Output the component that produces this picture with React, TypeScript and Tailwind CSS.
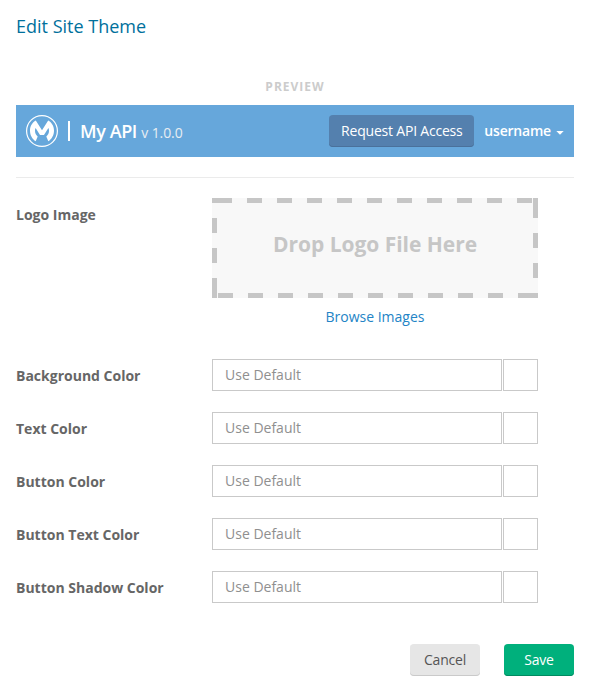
const FIELDS = [
  'Background Color',
  'Text Color',
  'Button Color',
  'Button Text Color',
  'Button Shadow Color',
];

// Left/top offsets of the repeated dashes around the drop zone.
const COLUMNS = [35, 65, 95, 125, 155, 185, 215, 245, 275, 305];

function Logo() {
  return (
    <svg width="32" height="32" viewBox="0 0 32 32" fill="none" aria-hidden="true">
      <circle cx="16" cy="16" r="15.4" stroke="#fff" strokeWidth="1.2" />
      <path
        d="M9.8 5.6 C6.2 7.7 4 11.5 4 15.7 C4 20.1 6.2 24 9.7 26.3 L11.7 21.4 C10 20 9 18 9 15.7 C9 14.7 9.2 13.8 9.6 13 L14 20 H18 L22.4 13 C22.8 13.8 23 14.7 23 15.7 C23 18 22 20 20.3 21.4 L22.3 26.3 C25.8 24 28 20.1 28 15.7 C28 11.5 25.8 7.7 22.2 5.6 L16 15.2 Z"
        fill="#fff"
      />
    </svg>
  );
}

function DropZone() {
  return (
    <div className="relative flex h-[100px] w-[326px] items-center justify-center bg-[#f8f8f8]">
      <svg className="absolute inset-0" width="326" height="100" fill="#c6c6c6" shapeRendering="crispEdges" aria-hidden="true">
        <rect x="0" y="0" width="20" height="5" />
        {COLUMNS.map((x) => (
          <rect key={x} x={x} y="0" width="15" height="5" />
        ))}
        {COLUMNS.map((x) => (
          <rect key={x} x={x - 29} y="95" width="15" height="5" />
        ))}
        <rect x="306" y="95" width="20" height="5" />
        <rect x="321" y="0" width="5" height="20" />
        <rect x="321" y="35" width="5" height="15" />
        <rect x="321" y="65" width="5" height="15" />
        <rect x="0" y="20" width="5" height="15" />
        <rect x="0" y="50" width="5" height="15" />
        <rect x="0" y="80" width="5" height="20" />
      </svg>
      <span className="pb-[9px] text-[21px] font-bold tracking-[-0.03px] text-[#c6c6c6]">Drop Logo File Here</span>
    </div>
  );
}

export default function App() {
  return (
    <main className="h-[692px] w-[589px] overflow-hidden bg-white pr-[15px] pl-4 font-['Open_Sans',sans-serif] text-sm whitespace-nowrap text-[#666]">
      <h1 className="pt-[13px] text-lg leading-[26px] text-[#00709c]">Edit Site Theme</h1>

      <div className="mt-[39px] text-center text-xs leading-[18px] font-bold tracking-[1px] text-[#ccc]">PREVIEW</div>

      <header className="mt-[9px] flex h-[52px] items-center bg-[#66a7db] px-[10px] text-white">
        <Logo />
        <span className="ml-[10px] h-5 w-0.5 bg-white" />
        <span className="ml-[10px] text-lg font-semibold tracking-[-0.4px]">
          My API <span className="text-sm font-normal tracking-[-0.1px] text-[#e8edf2]">v 1.0.0</span>
        </span>
        <button className="ml-auto h-8 w-[145px] rounded-[4px] bg-[#5480ae] text-sm tracking-[-0.2px] shadow-[inset_0_-1px_0_#4a719b]">
          Request API Access
        </button>
        <span className="ml-[10px] text-sm font-semibold tracking-[-0.2px]">username</span>
        <svg className="mt-[3px] ml-[5px]" width="8" height="4" viewBox="0 0 8 4" fill="#fff" aria-hidden="true">
          <path d="M0.3 0H7.7L4 3.7Z" />
        </svg>
      </header>

      <hr className="mt-5 border-[#ebebeb]" />

      <section className="mt-5 flex">
        <span className="w-[196px] pt-[7px] font-bold">Logo Image</span>
        <div className="text-center">
          <DropZone />
          <a className="mt-[9px] block leading-5 text-[#2384c6]">Browse Images</a>
        </div>
      </section>

      <form className="mt-8 flex flex-col gap-[21px]">
        {FIELDS.map((label) => (
          <label key={label} className="flex h-8 items-center">
            <span className="w-[196px] pt-0.5 font-bold">{label}</span>
            <input
              className="h-8 w-[290px] border border-[#c9c9c9] px-3 pb-0.5 text-sm placeholder:text-[#8f8f8f]"
              placeholder="Use Default"
            />
            <span className="ml-px h-8 w-[35px] border border-[#c9c9c9]" />
          </label>
        ))}
      </form>

      <footer className="mt-[41px] flex justify-end gap-6">
        <button className="h-8 w-[70px] rounded-[4px] bg-[#e6e6e6] text-sm tracking-[-0.2px] text-[#555] shadow-[inset_0_-1px_0_#cacaca]">
          Cancel
        </button>
        <button className="h-8 w-[70px] rounded-[4px] bg-[#00b07c] text-sm tracking-[-0.2px] text-white shadow-[inset_0_-1px_0_#008a60]">
          Save
        </button>
      </footer>
    </main>
  );
}
